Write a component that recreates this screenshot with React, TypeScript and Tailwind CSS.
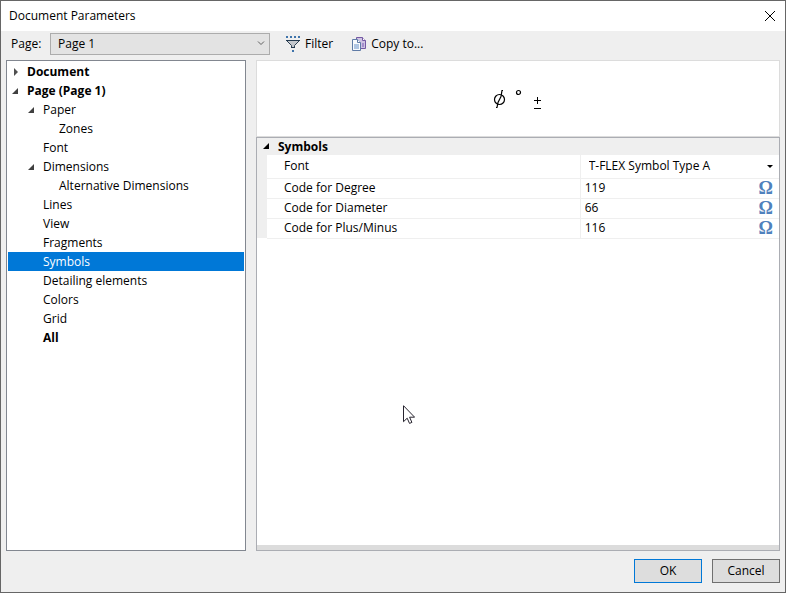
import { useState } from "react";

type TreeItem = {
  label: string;
  indent: string;
  state?: "open" | "closed";
  bold?: boolean;
};

const treeItems: TreeItem[] = [
  { label: "Document", indent: "pl-1", state: "closed", bold: true },
  { label: "Page (Page 1)", indent: "pl-1", state: "open", bold: true },
  { label: "Paper", indent: "pl-5", state: "open" },
  { label: "Zones", indent: "pl-9" },
  { label: "Font", indent: "pl-5" },
  { label: "Dimensions", indent: "pl-5", state: "open" },
  { label: "Alternative Dimensions", indent: "pl-9" },
  { label: "Lines", indent: "pl-5" },
  { label: "View", indent: "pl-5" },
  { label: "Fragments", indent: "pl-5" },
  { label: "Symbols", indent: "pl-5" },
  { label: "Detailing elements", indent: "pl-5" },
  { label: "Colors", indent: "pl-5" },
  { label: "Grid", indent: "pl-5" },
  { label: "All", indent: "pl-5", bold: true },
];

const codes = [
  { id: "degree", label: "Code for Degree", value: "119" },
  { id: "diameter", label: "Code for Diameter", value: "66" },
  { id: "plusminus", label: "Code for Plus/Minus", value: "116" },
];

function Twisty({ state }: { state?: "open" | "closed" }) {
  return (
    <svg viewBox="0 0 8 8" className="size-2 shrink-0" aria-hidden="true">
      {state === "open" && <path d="M6 1v6H0z" fill="#404040" />}
      {state === "closed" && <path d="M2 0l4 4-4 4z" fill="#505050" />}
    </svg>
  );
}

function FilterIcon() {
  return (
    <svg viewBox="0 0 16 16" className="size-4 shrink-0" shapeRendering="crispEdges" aria-hidden="true">
      <path d="M1 0h2v2H1zM5 0h2v2H5zM9 0h2v2H9zM13 0h2v2h-2zM7 14h2v2H7z" fill="#3f74ab" />
      <path d="M1.500 4.500h13l-5 5v2h-3v-2z" fill="#c4c8cd" stroke="#2d4053" shapeRendering="auto" />
      <path d="M1 4h14v1H1zM6 11h4v1H6z" fill="#22384d" />
    </svg>
  );
}

function CopyIcon() {
  return (
    <svg viewBox="0 0 16 16" className="size-4 shrink-0" aria-hidden="true">
      <path d="M5.500 1.500h6l3 3v8h-9z" fill="#cfc3e3" stroke="#7459a3" />
      <path d="M11.500 1.500v3h3" fill="#fff" stroke="#7459a3" />
      <path d="M11 7h2v4h-2z" fill="#a48fcb" />
      <path d="M1.500 3.500h5l3 3v8h-8z" fill="#f8fafd" stroke="#5f7ba6" />
      <path d="M6.500 3.500v3h3" fill="#fff" stroke="#5f7ba6" />
      <path d="M3 8h5v5H3z" fill="#afc5e2" />
    </svg>
  );
}

export default function App() {
  const [selected, setSelected] = useState("Symbols");

  return (
    <div className="relative flex h-screen flex-col border border-[#666666] bg-[#efefef] font-['Open_Sans','Noto_Sans',sans-serif] text-xs text-black">
      <header className="flex h-[30px] shrink-0 items-center justify-between bg-white pl-2 pr-[5px] pb-px">
        <h1>Document Parameters</h1>
        <button type="button" aria-label="Close" className="p-1">
          <svg viewBox="0 0 12 12" className="size-3">
            <path d="M1 1l10 10M11 1L1 11" stroke="#000" fill="none" />
          </svg>
        </button>
      </header>

      <div className="flex h-[29px] shrink-0 items-center pb-[3px] pl-2.5">
        <label htmlFor="page" className="w-[39px]">Page:</label>
        <div className="relative">
          <select
            id="page"
            className="block h-[22px] w-[220px] appearance-none border border-[#acacac] bg-[#e3e3e3] pl-[7px]"
          >
            <option>Page 1</option>
          </select>
          <svg viewBox="0 0 8 8" className="pointer-events-none absolute right-[5px] top-1.5 size-2" aria-hidden="true">
            <path d="M1 2.500l3 3 3-3" stroke="#606060" fill="none" />
          </svg>
        </div>
        <button type="button" className="ml-[15px] flex items-center gap-1">
          <FilterIcon />
          Filter
        </button>
        <button type="button" className="ml-[18px] flex items-center gap-1">
          <CopyIcon />
          Copy to...
        </button>
      </div>

      <main className="flex min-h-0 flex-1 gap-2.5 px-[5px]">
        <ul role="tree" aria-label="Parameters" className="w-[240px] shrink-0 border border-[#828790] bg-white p-px">
          {treeItems.map((item) => (
            <li
              key={item.label}
              role="treeitem"
              aria-selected={item.label === selected}
              onClick={() => setSelected(item.label)}
              className={`flex h-[19px] items-center gap-[7px] ${item.indent} ${item.bold ? "font-bold" : ""} ${
                item.label === selected ? "bg-[#0078d7] text-white" : ""
              }`}
            >
              <Twisty state={item.state} />
              {item.label}
            </li>
          ))}
        </ul>

        <section className="flex min-w-0 flex-1 flex-col">
          <div className="flex h-[77px] shrink-0 items-center justify-center border border-[#dcdcdc] bg-white">
            <svg viewBox="0 0 50 22" className="h-[22px] w-[50px]" fill="none" stroke="#000" role="img" aria-label="Diameter, degree, plus-minus">
              <circle cx="6.500" cy="11.500" r="5" strokeWidth="1.200" />
              <path d="M10 2.500H9l-1 6-3 6-1 5H3" strokeWidth="1.200" />
              <circle cx="25.500" cy="4.500" r="2" strokeWidth="1.200" />
              <path d="M41 12.500h7M44.500 9v7M41 20.500h7" />
            </svg>
          </div>
          <div className="flex min-h-0 flex-1 flex-col border border-[#abadb3] bg-white">
            <table className="w-full table-fixed border-collapse">
              <colgroup>
                <col className="w-2.5" />
                <col className="w-[60%]" />
                <col />
              </colgroup>
              <tbody>
                <tr className="h-[17px] bg-[#efefef]">
                  <th colSpan={3} className="p-0 pl-[5px] text-left leading-4">
                    <div className="flex items-center gap-2">
                      <svg viewBox="0 0 8 8" className="size-2" aria-hidden="true">
                        <path d="M7 0v6H1z" fill="#000" />
                      </svg>
                      Symbols
                    </div>
                  </th>
                </tr>
                <tr className="h-[23px]">
                  <td className="bg-[#efefef] p-0" />
                  <th className="border-b border-r border-[#efefef] p-0 pl-[17px] text-left font-normal">
                    <label htmlFor="font">Font</label>
                  </th>
                  <td className="relative border-b border-[#efefef] p-0">
                    <select id="font" className="block h-5 w-full appearance-none bg-transparent pl-2">
                      <option>T-FLEX Symbol Type A</option>
                    </select>
                    <svg viewBox="0 0 6 4" className="pointer-events-none absolute right-1.5 top-2.5 h-1 w-1.5" aria-hidden="true">
                      <path d="M0 0h6L3 3z" fill="#000" />
                    </svg>
                  </td>
                </tr>
                {codes.map((code) => (
                  <tr key={code.id} className="h-5">
                    <td className="bg-[#efefef] p-0" />
                    <th className="border-b border-r border-[#efefef] p-0 pl-[17px] text-left font-normal">
                      <label htmlFor={code.id}>{code.label}</label>
                    </th>
                    <td className="border-b border-[#efefef] p-0">
                      <div className="flex h-[19px] items-center pr-1.5">
                        <input id={code.id} defaultValue={code.value} className="h-4 min-w-0 flex-1 pl-1 leading-4 outline-none" />
                        <button
                          type="button"
                          aria-label={`Pick symbol, ${code.label}`}
                          className="font-['Liberation_Serif',serif] text-lg leading-4 font-bold text-[#4f81bd]"
                        >
                          Ω
                        </button>
                      </div>
                    </td>
                  </tr>
                ))}
              </tbody>
            </table>
            <div className="mt-auto h-[5px] bg-[#dcdcdc]" />
          </div>
        </section>
      </main>

      <footer className="flex shrink-0 justify-end gap-2.5 px-[5px] pt-2 pb-[9px]">
        <button type="button" className="h-6 w-[68px] border border-[#0078d7] bg-[#dddddd]">OK</button>
        <button type="button" className="h-6 w-[68px] border border-[#707070] bg-[#dddddd]">Cancel</button>
      </footer>

      <svg viewBox="0 0 12 19" className="pointer-events-none absolute left-[402px] top-[404px] h-[19px] w-3" aria-hidden="true">
        <path d="M.5.700v16l3.700-3.500 2.300 5.200 2.400-1-2.300-5.200h5z" fill="#fff" stroke="#26232e" />
      </svg>
    </div>
  );
}
